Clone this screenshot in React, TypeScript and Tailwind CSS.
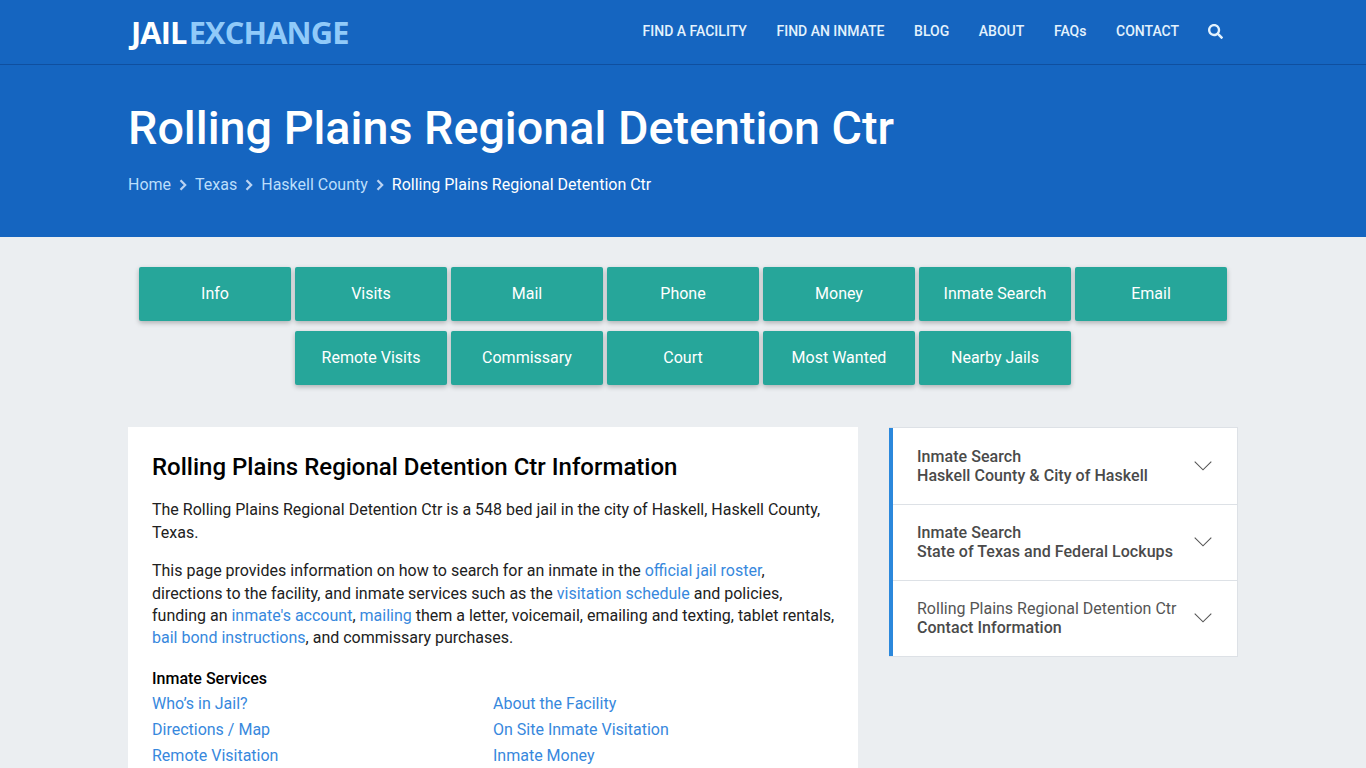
import React from "react";

const navItems = ["FIND A FACILITY", "FIND AN INMATE", "BLOG", "ABOUT", "FAQs", "CONTACT"];
const row1 = ["Info", "Visits", "Mail", "Phone", "Money", "Inmate Search", "Email"];
const row2 = ["Remote Visits", "Commissary", "Court", "Most Wanted", "Nearby Jails"];
const services = [
  ["Who’s in Jail?", "About the Facility"],
  ["Directions / Map", "On Site Inmate Visitation"],
  ["Remote Visitation", "Inmate Money"],
];

function Chevron() {
  return (
    <svg width="10" height="12" viewBox="0 0 10 12" className="mx-[7px]" fill="none" stroke="#bbd3f2" strokeWidth="2.2">
      <path d="M2.5 1.200L7.200 6L2.500 10.800" />
    </svg>
  );
}

function TabButton({ label }: { label: string }) {
  return (
    <a className="flex h-[54px] w-[152px] items-center justify-center rounded-[2px] bg-[#26a69a] text-[16px] text-white shadow-[0_2px_5px_rgba(0,0,0,0.26)]">
      {label}
    </a>
  );
}

function Link({ children }: { children: React.ReactNode }) {
  return <a className="text-[#3788dd]">{children}</a>;
}

function Accordion({ top, bottom, lightTop, last }: { top: string; bottom: string; lightTop?: boolean; last?: boolean }) {
  return (
    <div className={`flex h-[76px] items-center justify-between border-l-4 border-l-[#2b88dc] pb-[1px] pl-[24px] pr-[25px] ${last ? "" : "shadow-[0_1px_0_#dde1e6]"}`}>
      <div className="text-[16px] leading-[19px] tracking-[0.05px] text-[#4a4a4a]">
        <div className={lightTop ? "font-normal tracking-normal text-[#555]" : "font-medium"}>{top}</div>
        <div className="font-medium">{bottom}</div>
      </div>
      <svg width="18" height="10" viewBox="0 0 18 10" fill="none" stroke="#555" strokeWidth="1.1">
        <path d="M0.7 0.7L9 8.8L17.3 0.7" />
      </svg>
    </div>
  );
}

export default function App() {
  return (
    <div className="h-[768px] overflow-hidden bg-[#ebeef1] font-['Roboto',sans-serif]">
      <header className="h-[65px] border-b border-b-[#0f4f9f] bg-[#1565c0] shadow-[0_1px_2px_rgba(0,0,0,0.2)]">
        <div className="mx-auto flex h-[64px] w-[1110px] items-center justify-between">
          <div className="ml-[3px] flex font-['Open_Sans',sans-serif] text-[30.800px] font-bold leading-none tracking-[-0.850px]">
            <span className="text-white">JAIL</span>
            <span className="ml-[2px] text-[#90caf9]">EXCHANGE</span>
          </div>
          <nav className="flex items-center gap-[29.600px] text-[14px] font-medium text-[#e3f2fd]">
            {navItems.map((n) => (
              <a key={n} className="translate-x-[0.700px] -translate-y-[1px]">{n}</a>
            ))}
            <svg className="mr-[15px] -translate-y-[1px]" width="15" height="15" viewBox="0 0 512 512" fill="#e3f2fd">
              <path d="M505 442.700L405.300 343c-4.500-4.500-10.600-7-17-7H372c27.600-35.300 44-79.700 44-128C416 93.100 322.900 0 208 0S0 93.100 0 208s93.100 208 208 208c48.300 0 92.700-16.400 128-44v16.300c0 6.400 2.500 12.500 7 17l99.700 99.700c9.400 9.400 24.600 9.400 33.900 0l28.300-28.300c9.400-9.400 9.400-24.600.1-34zM208 336c-70.700 0-128-57.200-128-128 0-70.700 57.200-128 128-128 70.700 0 128 57.200 128 128 0 70.700-57.200 128-128 128z" />
            </svg>
          </nav>
        </div>
      </header>

      <section className="h-[172px] bg-[#1565c0]">
        <div className="mx-auto w-[1110px]">
          <h1 className="pt-[33px] text-[46.700px] font-medium leading-[60px] text-white">Rolling Plains Regional Detention Ctr</h1>
          <div className="mt-[15px] flex items-center text-[16px] leading-[24px] text-[#bbdefb]">
            <span>Home</span>
            <Chevron />
            <span>Texas</span>
            <Chevron />
            <span>Haskell County</span>
            <Chevron />
            <span className="text-white">Rolling Plains Regional Detention Ctr</span>
          </div>
        </div>
      </section>

      <div className="mt-[30px] flex flex-col items-center gap-[10px]">
        <div className="flex gap-[4px]">{row1.map((l) => <TabButton key={l} label={l} />)}</div>
        <div className="flex gap-[4px]">{row2.map((l) => <TabButton key={l} label={l} />)}</div>
      </div>

      <main className="mx-auto mt-[42px] flex w-[1110px] items-start justify-between">
        <article className="h-[400px] w-[730px] bg-white pl-[24px] pr-[23px] pt-[25.300px] text-[16px] leading-[22.400px] text-[#212121]">
          <h2 className="mb-[17px] text-[24px] font-medium leading-[30px] text-black">Rolling Plains Regional Detention Ctr Information</h2>
          <p className="mb-[16px]">The Rolling Plains Regional Detention Ctr is a 548 bed jail in the city of Haskell, Haskell County, Texas.</p>
          <p className="mb-[16px]">
            This page provides information on how to search for an inmate in the <Link>official jail roster</Link>, directions to the facility, and inmate services such as the <Link>visitation schedule</Link> and policies, funding an <Link>inmate's account</Link>, <Link>mailing</Link> them a letter, voicemail, emailing and texting, tablet rentals, <Link>bail bond instructions</Link>, and commissary purchases.
          </p>
          <div className="font-medium leading-[25px] text-black">Inmate Services</div>
          <div className="grid grid-cols-[341px_1fr] leading-[26px]">
            {services.flat().map((s) => (
              <Link key={s}>{s}</Link>
            ))}
          </div>
        </article>
        <aside className="w-[349px] border border-[#dde1e6] border-l-0 bg-white">
          <Accordion top="Inmate Search" bottom="Haskell County & City of Haskell" />
          <Accordion top="Inmate Search" bottom="State of Texas and Federal Lockups" />
          <Accordion top="Rolling Plains Regional Detention Ctr" bottom="Contact Information" lightTop last />
        </aside>
      </main>
    </div>
  );
}
